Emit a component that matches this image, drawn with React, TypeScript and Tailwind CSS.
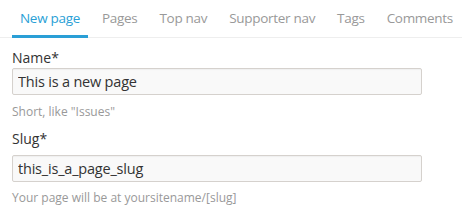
import React from 'react'

const tabs = ['New page', 'Pages', 'Top nav', 'Supporter nav', 'Tags', 'Comments']

export default function App() {
  return (
    <div className="h-[211px] w-[462px] overflow-hidden bg-white font-['Open_Sans',sans-serif]">
      <nav className="flex gap-[6px] whitespace-nowrap border-b border-[#eee] pl-3">
        {tabs.map((t, i) => (
          <div
            key={t}
            className={
              i === 0
                ? '-mb-px h-[38px] border-b-[3px] border-[#2a9fd6] px-2 pt-[8px] text-[13.5px] tracking-[-0.3px] text-[#2a9fd6]'
                : 'h-[37px] px-2 pt-[8px] text-[13.5px] tracking-[-0.3px] text-[#999]'
            }
          >
            {t}
          </div>
        ))}
      </nav>
      <div className="flex flex-col px-3 pt-[10px]">
        <label className="text-[14px] leading-[20px] text-[#333]">Name*</label>
        <input
          readOnly
          value="This is a new page"
          className="h-[27px] w-[410px] rounded-[2px] border border-[#d5d1cd] bg-[#f9f9f9] px-[5px] text-[14.5px] tracking-[-0.2px] text-[#333] shadow-[inset_0_1px_1px_rgba(0,0,0,0.04)] outline-none"
        />
        <div className="mt-[9px] text-[12px] leading-[16px] text-[#999]">Short, like "Issues"</div>

        <label className="mt-[9px] text-[14px] leading-[20px] text-[#333]">Slug*</label>
        <input
          readOnly
          value="this_is_a_page_slug"
          className="mt-[6px] h-[27px] w-[410px] rounded-[2px] border border-[#d5d1cd] bg-[#f9f9f9] px-[5px] text-[14.5px] tracking-[-0.2px] text-[#333] shadow-[inset_0_1px_1px_rgba(0,0,0,0.04)] outline-none"
        />
        <div className="mt-[8px] text-[12px] leading-[16px] text-[#999]">Your page will be at yoursitename/[slug]</div>
      </div>
    </div>
  )
}
